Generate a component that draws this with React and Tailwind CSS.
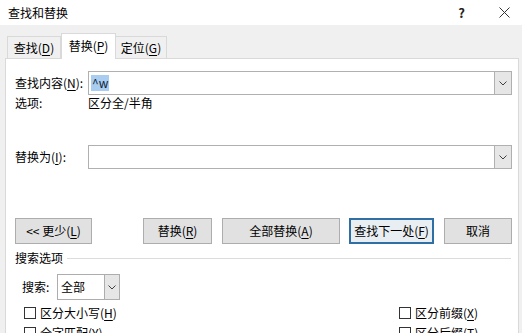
import React from "react";

const F = { fontFamily: '"Noto Sans CJK SC", "Noto Sans", sans-serif' };

function U({ children }) {
  return <span className="underline underline-offset-2">{children}</span>;
}

function Chevron() {
  return (
    <svg width="8" height="5" viewBox="0 0 8 5">
      <path d="M0.5 0.5 L4 4 L7.5 0.5" fill="none" stroke="#404040" strokeWidth="1" />
    </svg>
  );
}

function Combo({ children, className }) {
  return (
    <div className={"flex h-[24px] border border-[#b0b0b0] bg-white " + className}>
      <div className="flex flex-1 items-center pl-[2px]">{children}</div>
      <div className="flex w-[17px] items-center justify-center border-l border-[#b0b0b0] bg-[#e6e6e6]">
        <Chevron />
      </div>
    </div>
  );
}

function Btn({ children, className, focus }) {
  return (
    <div
      className={
        "flex h-[26px] items-center justify-center text-[12px] text-black " +
        (focus
          ? "border-2 border-[#2f6fa3] bg-[#e9eef2] "
          : "border border-[#adadad] bg-[#e1e1e1] ") +
        className
      }
    >
      {children}
    </div>
  );
}

function Check({ children }) {
  return (
    <div className="flex items-center gap-[4px]">
      <div className="h-[12px] w-[12px] border border-[#333] bg-white" />
      <span>{children}</span>
    </div>
  );
}

export default function App() {
  return (
    <div className="flex h-[333px] w-[522px] flex-col overflow-hidden bg-[#f0f0f0] text-[12px] text-black" style={F}>
      <div className="flex h-[25px] shrink-0 items-center justify-between bg-white pl-[8px]">
        <span className="text-[12px]">查找和替换</span>
        <div className="flex items-center">
          <span className="mr-[34px] text-[13px] font-bold text-[#222]">?</span>
          <svg width="11" height="11" viewBox="0 0 11 11" className="mr-[12px]">
            <path d="M0.5 0.5 L10.5 10.5 M10.5 0.5 L0.5 10.5" stroke="#333" strokeWidth="1" />
          </svg>
        </div>
      </div>
      <div className="flex h-[33px] shrink-0 items-end pl-[7px]">
        <div className="mb-[-1px] flex h-[23px] w-[54px] items-center justify-center border border-b-0 border-[#d9d9d9] bg-[#f0f0f0]">
          查找(<U>D</U>)
        </div>
        <div className="relative z-10 mb-[-1px] flex h-[26px] w-[55px] items-center justify-center border border-b-0 border-[#d9d9d9] bg-white pb-[2px]">
          替换(<U>P</U>)
        </div>
        <div className="mb-[-1px] flex h-[23px] w-[51px] items-center justify-center border border-b-0 border-l-0 border-[#d9d9d9] bg-[#f0f0f0]">
          定位(<U>G</U>)
        </div>
      </div>
      <div className="ml-[5px] flex h-[300px] w-[514px] shrink-0 flex-col border border-[#d9d9d9] bg-white pl-[9px]">
        <div className="mt-[12px] flex h-[24px] items-center">
          <span className="w-[73px]">查找内容(<U>N</U>):</span>
          <Combo className="w-[424px]">
            <span className="bg-[#a8cdf0] px-[1px] leading-[16px] text-[#123]">^w</span>
          </Combo>
        </div>
        <div className="flex h-[16px] items-center">
          <span className="w-[73px]">选项:</span>
          <span>区分全/半角</span>
        </div>
        <div className="mt-[34px] flex h-[24px] items-center">
          <span className="w-[73px]">替换为(<U>I</U>):</span>
          <Combo className="w-[424px]" />
        </div>
        <div className="mt-[49px] flex items-center">
          <Btn className="w-[77px]">&lt;&lt; 更少(<U>L</U>)</Btn>
          <Btn className="ml-[51px] w-[69px]">替换(<U>R</U>)</Btn>
          <Btn className="ml-[10px] w-[118px]">全部替换(<U>A</U>)</Btn>
          <Btn focus className="ml-[9px] w-[85px]">查找下一处(<U>F</U>)</Btn>
          <Btn className="ml-[10px] w-[68px]">取消</Btn>
        </div>
        <div className="mt-[7px] flex h-[14px] items-center pr-[7px]">
          <span>搜索选项</span>
          <div className="ml-[4px] h-px flex-1 bg-[#dcdcdc]" />
        </div>
        <div className="mt-[9px] flex h-[26px] items-center pl-[7px]">
          <span className="w-[35px]">搜索:</span>
          <div className="flex h-[26px] w-[63px] border border-[#adadad] bg-white">
            <div className="flex flex-1 items-center pl-[3px]">全部</div>
            <div className="flex w-[15px] items-center justify-center border-l border-[#adadad] bg-[#e6e6e6]">
              <Chevron />
            </div>
          </div>
        </div>
        <div className="mt-[5px] flex h-[16px] items-center pl-[9px]">
          <div className="w-[375px]">
            <Check>区分大小写(<U>H</U>)</Check>
          </div>
          <Check>区分前缀(<U>X</U>)</Check>
        </div>
        <div className="mt-[4px] flex h-[16px] items-center pl-[9px]">
          <div className="w-[375px]">
            <Check>全字匹配(<U>Y</U>)</Check>
          </div>
          <Check>区分后缀(<U>T</U>)</Check>
        </div>
      </div>
    </div>
  );
}
